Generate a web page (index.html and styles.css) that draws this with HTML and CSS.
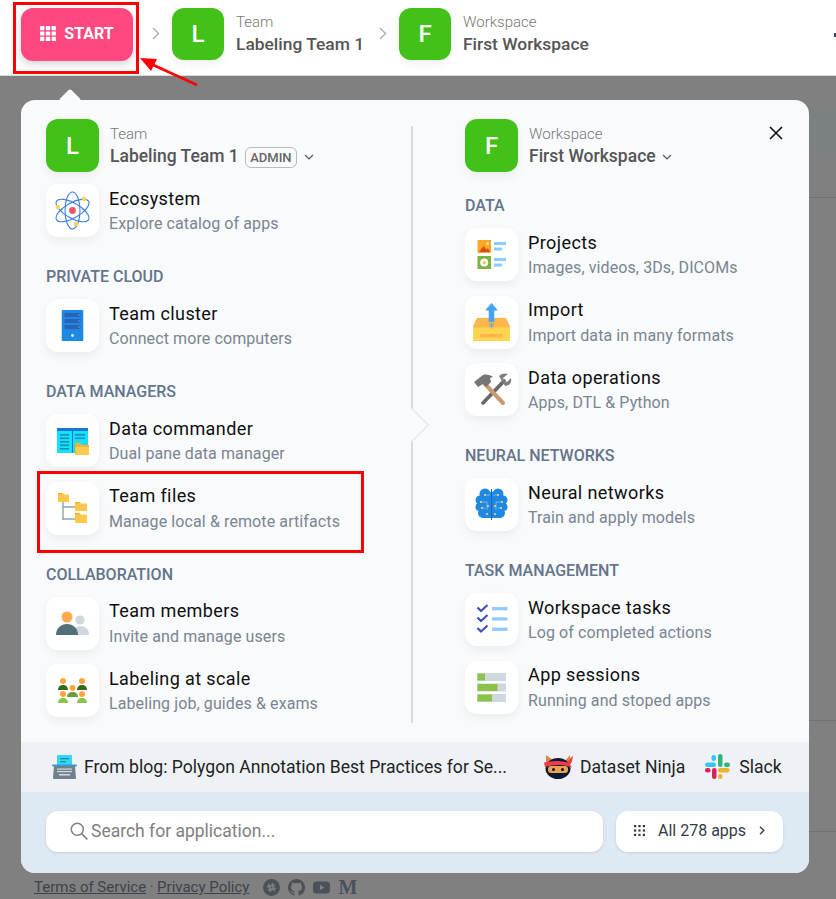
FILE: index.html
```html
<!DOCTYPE html>
<html lang="en">
<head>
  <meta charset="UTF-8">
  <meta name="viewport" content="width=device-width, initial-scale=1.0">
  <title>Start menu</title>
  <link rel="stylesheet" href="styles.css">
</head>
<body>

<header class="topbar">
  <button class="start-btn">
    <svg width="16" height="15" viewBox="0 0 16 15" fill="#fff"><rect width="4.4" height="4.2" rx=".6"/><rect x="5.8" width="4.4" height="4.2" rx=".6"/><rect x="11.6" width="4.4" height="4.2" rx=".6"/><rect y="5.4" width="4.4" height="4.2" rx=".6"/><rect x="5.8" y="5.4" width="4.4" height="4.2" rx=".6"/><rect x="11.6" y="5.4" width="4.4" height="4.2" rx=".6"/><rect y="10.8" width="4.4" height="4.2" rx=".6"/><rect x="5.8" y="10.8" width="4.4" height="4.2" rx=".6"/><rect x="11.6" y="10.8" width="4.4" height="4.2" rx=".6"/></svg>
    START
  </button>
  <svg class="crumb-sep" width="8" height="13" viewBox="0 0 8 13"><path d="M1 1l5.5 5.5L1 12" fill="none" stroke="#a8adb3" stroke-width="1.4"/></svg>
  <div class="avatar avatar-top">L</div>
  <div class="crumb-text">
    <div class="caption">Team</div>
    <div class="name">Labeling Team 1</div>
  </div>
  <svg class="crumb-sep" width="8" height="13" viewBox="0 0 8 13"><path d="M1 1l5.5 5.5L1 12" fill="none" stroke="#a8adb3" stroke-width="1.4"/></svg>
  <div class="avatar avatar-top">F</div>
  <div class="crumb-text">
    <div class="caption">Workspace</div>
    <div class="name">First Workspace</div>
  </div>
  <span class="top-dot"></span>
</header>

<main class="page-content">
  <div class="bg-band"></div>
  <div class="bg-row bg-row-a"></div>
  <div class="bg-row bg-row-b"></div>
  <div class="bg-row bg-row-c"></div>
  <footer class="site-footer">
    <a href="#">Terms of Service</a><span class="dot">·</span><a href="#">Privacy Policy</a>
    <span class="footer-icons">
      <svg width="17" height="17" viewBox="0 0 17 17"><circle cx="8.5" cy="8.5" r="8.5" fill="#4a5159"/><g transform="rotate(-15 8.5 8.5)"><path d="M6.8 5v7M10.2 5v7M5 6.8h7M5 10.2h7" stroke="#808080" stroke-width="1.6" stroke-linecap="round"/></g></svg>
      <svg width="17" height="17" viewBox="0 0 16 16" fill="#4a5159"><path d="M8 0C3.58 0 0 3.58 0 8c0 3.54 2.29 6.53 5.47 7.59.4.07.55-.17.55-.38 0-.19-.01-.82-.01-1.49-2.01.37-2.53-.49-2.69-.94-.09-.23-.48-.94-.82-1.13-.28-.15-.68-.52-.01-.53.63-.01 1.08.58 1.23.82.72 1.21 1.87.87 2.33.66.07-.52.28-.87.51-1.07-1.78-.2-3.64-.89-3.64-3.95 0-.87.31-1.59.82-2.15-.08-.2-.36-1.02.08-2.12 0 0 .67-.21 2.2.82.64-.18 1.32-.27 2-.27s1.36.09 2 .27c1.53-1.04 2.2-.82 2.2-.82.44 1.1.16 1.92.08 2.12.51.56.82 1.27.82 2.15 0 3.07-1.87 3.75-3.65 3.95.29.25.54.73.54 1.48 0 1.07-.01 1.93-.01 2.2 0 .21.15.46.55.38A8.01 8.01 0 0 0 16 8c0-4.42-3.58-8-8-8z"/></svg>
      <svg width="17" height="17" viewBox="0 0 17 17"><rect y="2.5" width="17" height="12" rx="3.5" fill="#4a5159"/><path d="M7 5.8v5.4l4.4-2.7z" fill="#808080"/></svg>
      <span class="medium-m">M</span>
    </span>
  </footer>
</main>

<section class="panel">
  <div class="panel-notch"></div>
  <button class="panel-close">
    <svg width="14" height="14" viewBox="0 0 14 14"><path d="M1 1l12 12M13 1L1 13" stroke="#111" stroke-width="1.6"/></svg>
  </button>

  <div class="panel-body">
    <div class="col col-left">
      <div class="col-head">
        <div class="avatar">L</div>
        <div class="crumb-text">
          <div class="caption">Team</div>
          <div class="name">Labeling Team 1 <span class="role">ADMIN</span>
            <svg class="caret" width="10" height="6" viewBox="0 0 10 6"><path d="M1 1l4 4 4-4" fill="none" stroke="#555" stroke-width="1.2"/></svg>
          </div>
        </div>
      </div>

      <a class="item item-first">
        <span class="icon">
          <svg viewBox="0 0 53 53" width="53" height="53"><g fill="none" stroke="#3d7fe0" stroke-width="1.1"><ellipse cx="26.5" cy="26.5" rx="18.5" ry="7.5" transform="rotate(30 26.5 26.5)"/><ellipse cx="26.5" cy="26.5" rx="18.5" ry="7.5" transform="rotate(90 26.5 26.5)"/><ellipse cx="26.5" cy="26.5" rx="18.5" ry="7.5" transform="rotate(150 26.5 26.5)"/></g><circle cx="26.5" cy="26.5" r="3.4" fill="#ef5565"/><circle cx="38" cy="15" r="2.2" fill="#ffd54f"/><circle cx="11.8" cy="23" r="2.2" fill="#ffd54f"/><circle cx="30" cy="40" r="2.2" fill="#ffd54f"/></svg>
        </span>
        <span class="item-text"><span class="item-title">Ecosystem</span><span class="item-sub">Explore catalog of apps</span></span>
      </a>

      <div class="section">
        <h4>Private cloud</h4>
        <a class="item">
          <span class="icon">
            <svg viewBox="0 0 53 53" width="53" height="53"><rect x="15.7" y="11" width="21.6" height="31" rx="1" fill="#1e88e5"/><rect x="18.5" y="14" width="16" height="4" fill="#2a62b8"/><rect x="18.5" y="20" width="16" height="4" fill="#2a62b8"/><rect x="18.5" y="26" width="16" height="4" fill="#2a62b8"/><circle cx="33" cy="16" r=".6" fill="#bbdefb"/><circle cx="33" cy="22" r=".6" fill="#bbdefb"/><circle cx="33" cy="28" r=".6" fill="#bbdefb"/><circle cx="26.5" cy="36.5" r="1.4" fill="#e3f2fd"/></svg>
          </span>
          <span class="item-text"><span class="item-title">Team cluster</span><span class="item-sub">Connect more computers</span></span>
        </a>
      </div>

      <div class="section">
        <h4>Data managers</h4>
        <a class="item">
          <span class="icon">
            <svg viewBox="0 0 53 53" width="53" height="53"><rect x="11" y="14" width="31" height="25" fill="#18e0fb"/><rect x="11" y="14" width="31" height="3" fill="#1976d2"/><rect x="26" y="17" width="1" height="22" fill="#1976d2"/><g fill="#0f8fb8"><rect x="14" y="20" width="9" height="1.6"/><rect x="14" y="23.5" width="9" height="1.6"/><rect x="14" y="27" width="9" height="1.6"/><rect x="14" y="30.5" width="9" height="1.6"/><rect x="14" y="34" width="9" height="1.6"/><rect x="29" y="20" width="10" height="1.6"/><rect x="29" y="23.5" width="10" height="1.6"/></g><path d="M29 29h5l1.5 2H43v10H29z" fill="#ffb02e"/><rect x="30" y="33" width="13" height="8" fill="#ffca4f"/></svg>
          </span>
          <span class="item-text"><span class="item-title">Data commander</span><span class="item-sub">Dual pane data manager</span></span>
        </a>
        <a class="item">
          <span class="icon">
            <svg viewBox="0 0 53 53" width="53" height="53"><path d="M17 20v18M17 25h12M17 37h12" fill="none" stroke="#90a4ae" stroke-width="1.4"/><path d="M12 11h5l1 1.5h5V20H12z" fill="#ffc84a"/><path d="M29 20h5l1 1.5h6V29H29z" fill="#ffc84a"/><path d="M29 31h5l1 1.5h6V41H29z" fill="#ffc84a"/><g fill="#ff9f2e"><rect x="12" y="11" width="4" height="1.2"/><rect x="29" y="20" width="4" height="1.2"/><rect x="29" y="31" width="4" height="1.2"/></g></svg>
          </span>
          <span class="item-text"><span class="item-title">Team files</span><span class="item-sub">Manage local &amp; remote artifacts</span></span>
        </a>
      </div>

      <div class="section">
        <h4>Collaboration</h4>
        <a class="item">
          <span class="icon">
            <svg viewBox="0 0 53 53" width="53" height="53"><circle cx="34" cy="23" r="4.6" fill="#cfd8dc"/><path d="M27 38c0-6 3-9 7.5-9s8.5 3 8.5 9z" fill="#cfd8dc"/><circle cx="21" cy="20" r="5.5" fill="#ffab4a"/><path d="M10 38c0-7 5-11 11-11s11 4 11 11z" fill="#546e7a"/></svg>
          </span>
          <span class="item-text"><span class="item-title">Team members</span><span class="item-sub">Invite and manage users</span></span>
        </a>
        <a class="item">
          <span class="icon">
            <svg viewBox="0 0 53 53" width="53" height="53"><g fill="#ffa53e"><circle cx="17" cy="17" r="3"/><circle cx="36" cy="17" r="3"/><circle cx="26.5" cy="24" r="3"/><circle cx="17" cy="30" r="3"/><circle cx="36" cy="30" r="3"/></g><g fill="#33691e"><path d="M12 26c0-3 2-5 5-5s5 2 5 5z"/><path d="M31 26c0-3 2-5 5-5s5 2 5 5z"/></g><path d="M21 33c0-3 2-5 5.5-5s5.5 2 5.5 5z" fill="#689f38"/><g fill="#8bc34a"><path d="M12 39c0-3 2-5 5-5s5 2 5 5z"/><path d="M31 39c0-3 2-5 5-5s5 2 5 5z"/></g></svg>
          </span>
          <span class="item-text"><span class="item-title">Labeling at scale</span><span class="item-sub">Labeling job, guides &amp; exams</span></span>
        </a>
      </div>
    </div>

    <div class="divider"><span class="divider-tip"></span></div>

    <div class="col col-right">
      <div class="col-head">
        <div class="avatar">F</div>
        <div class="crumb-text">
          <div class="caption">Workspace</div>
          <div class="name">First Workspace
            <svg class="caret" width="10" height="6" viewBox="0 0 10 6"><path d="M1 1l4 4 4-4" fill="none" stroke="#555" stroke-width="1.2"/></svg>
          </div>
        </div>
      </div>

      <div class="section section-first">
        <h4>Data</h4>
        <a class="item">
          <span class="icon">
            <svg viewBox="0 0 53 53" width="53" height="53"><rect x="12.5" y="12" width="13.5" height="13" fill="#ffa726"/><path d="M14 24l4.5-6 3 3.5 1.5-1.5 2 4z" fill="#d84f15"/><circle cx="22.5" cy="15.5" r="1.3" fill="#fff3c4"/><rect x="12.5" y="28" width="13.5" height="13" fill="#7cb342"/><circle cx="19.2" cy="34.5" r="4" fill="#fff"/><circle cx="19.2" cy="34.5" r="1.5" fill="#ffb74d"/><g fill="#90caf9"><rect x="29" y="14" width="12" height="3"/><rect x="29" y="19.5" width="8" height="3"/><rect x="29" y="30" width="12" height="3"/><rect x="29" y="35.5" width="8" height="3"/></g></svg>
          </span>
          <span class="item-text"><span class="item-title">Projects</span><span class="item-sub">Images, videos, 3Ds, DICOMs</span></span>
        </a>
        <a class="item">
          <span class="icon">
            <svg viewBox="0 0 53 53" width="53" height="53"><path d="M12 22h29l4 8H8z" fill="#ffb74d"/><path d="M8 30h37v15H8z" fill="#ffd54f"/><rect x="8" y="30" width="37" height="1.5" fill="#ffb74d"/><rect x="15" y="38" width="23" height="3.5" fill="#ffb74d"/><path d="M26.5 7l6.5 7.5h-3.7V26h-5.6V14.5H20z" fill="#42a5f5"/><path d="M25 27v4M26.5 27v6M28 27v4" stroke="#42a5f5" stroke-width=".7"/></svg>
          </span>
          <span class="item-text"><span class="item-title">Import</span><span class="item-sub">Import data in many formats</span></span>
        </a>
        <a class="item">
          <span class="icon">
            <svg viewBox="0 0 53 53" width="53" height="53"><path d="M18 40L39 18" stroke="#6a6a6a" stroke-width="3.8" stroke-linecap="round"/><path d="M34 13c3-3 6-3 9-2l-5 4 1 3 3 1 4-4c1 4-1 8-6 8z" fill="#808080"/><path d="M20 21l18 19" stroke="#c99a6b" stroke-width="4" stroke-linecap="round"/><path d="M9 19l9-7c3-1 8 0 10 2l-3 1 1 4-5 5-3-3-5 3z" fill="#767676"/></svg>
          </span>
          <span class="item-text"><span class="item-title">Data operations</span><span class="item-sub">Apps, DTL &amp; Python</span></span>
        </a>
      </div>

      <div class="section">
        <h4>Neural networks</h4>
        <a class="item">
          <span class="icon">
            <svg viewBox="0 0 53 53" width="53" height="53"><g fill="#1e88e5"><circle cx="20" cy="16" r="5.5"/><circle cx="33" cy="16" r="5.5"/><circle cx="15" cy="22" r="4.5"/><circle cx="38" cy="22" r="4.5"/><circle cx="14.5" cy="29" r="4"/><circle cx="38.5" cy="29" r="4"/><circle cx="18" cy="35" r="5"/><circle cx="35" cy="35" r="5"/><rect x="17" y="14" width="19" height="26"/></g><rect x="26" y="11" width="1" height="31" fill="#1565c0"/><g fill="none" stroke="#90caf9" stroke-width=".7"><path d="M20 17h5M33 17h-5M16 24h6v8M37 24h-6v8M20 30h-3M33 30h3"/></g><g fill="#ffd54f"><circle cx="20" cy="17" r="1.1"/><circle cx="33" cy="17" r="1.1"/><circle cx="16" cy="24" r="1.1"/><circle cx="37" cy="24" r="1.1"/><circle cx="23" cy="28" r="1.1"/><circle cx="30" cy="28" r="1.1"/><circle cx="17" cy="30" r="1.1"/><circle cx="36" cy="30" r="1.1"/><circle cx="22" cy="36" r="1.1"/><circle cx="30" cy="36" r="1.1"/></g></svg>
          </span>
          <span class="item-text"><span class="item-title">Neural networks</span><span class="item-sub">Train and apply models</span></span>
        </a>
      </div>

      <div class="section">
        <h4>Task management</h4>
        <a class="item">
          <span class="icon">
            <svg viewBox="0 0 53 53" width="53" height="53"><path d="M12.5 14.5l3.5 3.5 6.5-6M12.5 24.5l3.5 3.5 6.5-6M12.5 35l3.5 3.5 6.5-6" fill="none" stroke="#3f51b5" stroke-width="2.2"/><g fill="#90caf9"><rect x="27" y="14" width="15.5" height="3.3"/><rect x="27" y="24.3" width="15.5" height="3.3"/><rect x="27" y="34.6" width="15.5" height="3.3"/></g></svg>
          </span>
          <span class="item-text"><span class="item-title">Workspace tasks</span><span class="item-sub">Log of completed actions</span></span>
        </a>
        <a class="item">
          <span class="icon">
            <svg viewBox="0 0 53 53" width="53" height="53"><g fill="#cfd8dc"><rect x="12" y="12" width="29" height="8"/><rect x="12" y="22.5" width="29" height="8"/><rect x="12" y="33" width="29" height="8"/></g><g fill="#8bc34a"><rect x="12.5" y="12.5" width="7.5" height="7"/><rect x="12.5" y="23" width="20" height="7"/><rect x="12.5" y="33.5" width="14.5" height="7"/></g></svg>
          </span>
          <span class="item-text"><span class="item-title">App sessions</span><span class="item-sub">Running and stoped apps</span></span>
        </a>
      </div>
    </div>
  </div>

  <div class="news-strip">
    <a class="news-link news-blog">
      <svg width="25" height="24" viewBox="0 0 25 24"><rect x="5" y="0" width="15" height="11" rx="1" fill="#35d7f2"/><rect x="8" y="3" width="9" height="1.3" fill="#1d8fb0"/><rect x="8" y="6" width="6" height="1.3" fill="#1d8fb0"/><rect y="9.5" width="25" height="2" rx="1" fill="#2f9be0"/><path d="M2 11h21l1 12a1 1 0 0 1-1 1H2a1 1 0 0 1-1-1z" fill="#71808c"/><g fill="#d5dce1"><rect x="5" y="13.5" width="15" height="1.2"/><rect x="5" y="16" width="15" height="1.2"/><rect x="7" y="19" width="11" height="1.5"/></g></svg>
      <span>From blog: Polygon Annotation Best Practices for Se...</span>
    </a>
    <a class="news-link news-ninja">
      <svg width="30" height="25" viewBox="0 0 30 25"><path d="M3 10L3 1l7 5zM22 7l5-6 1 9z" fill="#d98a3c"/><ellipse cx="15" cy="14.5" rx="12.5" ry="10.5" fill="#0e1a33"/><rect x="5" y="12" width="20" height="7" rx="3" fill="#e8a352"/><circle cx="10.5" cy="15.5" r="1.5" fill="#111"/><circle cx="19.5" cy="15.5" r="1.5" fill="#111"/><path d="M1 8.5c8-2 16-2 23 0l6-7-1 6-2 3 2 3-5-1.5c-7-2-15-1-22 1z" fill="#ef3b4e"/></svg>
      Dataset Ninja
    </a>
    <a class="news-link news-slack">
      <svg width="25" height="25" viewBox="0 0 25 25"><rect x="0" y="8.5" width="11" height="4.5" rx="2.25" fill="#36c5f0"/><rect x="6.5" y="1" width="4.5" height="6" rx="2.25" fill="#36c5f0"/><rect x="13" y="0" width="4.5" height="13" rx="2.25" fill="#2eb67d"/><rect x="19" y="8.5" width="6" height="4.5" rx="2.25" fill="#2eb67d"/><rect x="13" y="14" width="11.5" height="4.5" rx="2.25" fill="#ecb22e"/><rect x="13" y="20" width="4.5" height="5" rx="2.25" fill="#ecb22e"/><rect x="7" y="14" width="4.5" height="11" rx="2.25" fill="#e01e5a"/><rect x="0" y="14" width="5.5" height="4.5" rx="2.25" fill="#e01e5a"/></svg>
      Slack
    </a>
  </div>

  <div class="search-bar">
    <label class="search-box">
      <svg width="18" height="18" viewBox="0 0 18 18"><circle cx="7.3" cy="7.3" r="6" fill="none" stroke="#808080" stroke-width="1.5"/><path d="M11.8 11.8L17.3 17.3" stroke="#808080" stroke-width="1.7"/></svg>
      <input type="text" placeholder="Search for application...">
    </label>
    <button class="all-apps">
      <svg width="11" height="11" viewBox="0 0 11 11" fill="#333a47"><rect width="2.2" height="2.2"/><rect x="4.4" width="2.2" height="2.2"/><rect x="8.8" width="2.2" height="2.2"/><rect y="4.4" width="2.2" height="2.2"/><rect x="4.4" y="4.4" width="2.2" height="2.2"/><rect x="8.8" y="4.4" width="2.2" height="2.2"/><rect y="8.8" width="2.2" height="2.2"/><rect x="4.4" y="8.8" width="2.2" height="2.2"/><rect x="8.8" y="8.8" width="2.2" height="2.2"/></svg>
      <span>All 278 apps</span>
      <svg width="6" height="9" viewBox="0 0 6 9"><path d="M1 .8l3.8 3.7L1 8.2" fill="none" stroke="#333a47" stroke-width="1.3"/></svg>
    </button>
  </div>
</section>

<!-- red marks drawn over the screenshot -->
<div class="mark mark-start"></div>
<div class="mark mark-files"></div>
<svg class="mark-arrow" width="70" height="40" viewBox="0 0 70 40"><path d="M60 30L12 8" stroke="#f00" stroke-width="2.5"/><path d="M3 3l17 1-6 12z" fill="#f00"/></svg>

</body>
</html>
```

FILE: styles.css
```css
* {
  box-sizing: border-box;
}
html, body {
  height: 899px;
}
body {
  margin: 0;
  position: relative;
  overflow: hidden;
  font-family: Roboto, "Liberation Sans", sans-serif;
  background: #808080;
}
a {
  color: inherit;
  text-decoration: none;
}

/* top bar */
.topbar {
  height: 76px;
  display: flex;
  align-items: flex-start;
  padding: 8px 0 0 21px;
  background: #fff;
  border-bottom: 1px solid #d8d8d8;
  position: relative;
}
.start-btn {
  width: 112px;
  height: 53px;
  display: flex;
  align-items: center;
  justify-content: center;
  gap: 8px;
  padding: 0 0 3px;
  margin-right: 4px;
  border: none;
  border-radius: 12px;
  background: #ff4880;
  color: #fff;
  font-family: inherit;
  font-size: 16px;
  font-weight: 700;
  box-shadow: 0 3px 8px rgba(0,0,0,0.18);
}
.crumb-sep {
  margin: 19px 12px 0 15px;
  flex: none;
}
.avatar {
  width: 53px;
  height: 53px;
  flex: none;
  display: flex;
  align-items: center;
  justify-content: center;
  border-radius: 12px;
  background: #42c118;
  color: #fff;
  font-size: 24px;
  font-weight: 500;
  box-shadow: 0 4px 10px rgba(0,0,0,0.06);
}
.avatar-top {
  width: 52px;
  height: 52px;
}
.crumb-text {
  margin-left: 11px;
  padding-top: 5px;
}
.caption {
  height: 20px;
  line-height: 20px;
  font-size: 15px;
  font-weight: 300;
  color: #777;
}
.name {
  height: 24px;
  line-height: 24px;
  font-size: 17.5px;
  font-weight: 500;
  color: #555;
  white-space: nowrap;
}
.topbar .crumb-text {
  margin-left: 12px;
  padding-top: 4px;
}
.topbar .name {
  font-size: 17.4px;
}
.top-dot {
  position: absolute;
  right: 0;
  top: 33px;
  width: 2px;
  height: 4px;
  background: #3d4a66;
}

/* what can be seen of the page behind the overlay */
.page-content {
  padding-left: 40px;
}
.bg-band {
  margin-top: 32px;
  height: 45px;
  background: #7b8080;
}
.bg-row {
  border-bottom: 1px solid #717171;
}
.bg-row-a {
  height: 45px;
}
.bg-row-b {
  height: 523px;
}
.bg-row-c {
  height: 111px;
}
.site-footer {
  display: flex;
  align-items: center;
  height: 20px;
  margin: 45px 0 0 -6px;
  font-size: 15px;
  color: #3c434c;
}
.site-footer a {
  text-decoration: underline;
}
.site-footer .dot {
  margin: 0 3.5px;
}
.footer-icons {
  display: flex;
  align-items: center;
  gap: 8px;
  margin-left: 14px;
}
.medium-m {
  width: 17px;
  font-family: "Liberation Serif", serif;
  font-size: 20px;
  font-weight: 700;
  line-height: 17px;
  color: #4a5159;
}

/* popup */
.panel {
  position: absolute;
  left: 21px;
  top: 100px;
  width: 788px;
  height: 773px;
  display: flex;
  flex-direction: column;
  border-radius: 14px;
  background: #f8fafc;
}
.panel-notch {
  position: absolute;
  left: 41px;
  top: -8px;
  width: 16px;
  height: 16px;
  background: #f8fafc;
  transform: rotate(45deg);
  border-radius: 2px;
}
.panel-close {
  position: absolute;
  right: 26px;
  top: 26px;
  padding: 0;
  width: 14px;
  height: 14px;
  border: none;
  background: none;
  display: flex;
}
.panel-body {
  height: 642px;
  flex: none;
  display: flex;
  padding: 19px 0 0 25px;
}
.col-left {
  width: 365px;
}
.col-right {
  padding-left: 52px;
}
.col-head {
  display: flex;
  position: relative;
}
.role {
  display: inline-block;
  height: 21px;
  line-height: 19px;
  margin: 0 1px 0 2px;
  padding: 0 4px;
  border: 1px solid #b4bcc6;
  border-radius: 6px;
  font-size: 13px;
  font-weight: 500;
  color: #666;
}
.caret {
  margin-left: 2px;
  vertical-align: 2px;
}
.divider {
  width: 2px;
  height: 597px;
  margin-top: 7px;
  background: #d5dde4;
  position: relative;
}
.divider-tip {
  position: absolute;
  left: -11px;
  top: 287px;
  width: 24px;
  height: 24px;
  background: #f8fafc;
  border-top: 1px solid #dfe6ec;
  border-right: 1px solid #dfe6ec;
  transform: rotate(45deg);
}
.section {
  margin-top: 29px;
  display: flex;
  flex-direction: column;
}
.section-first {
  margin-top: 23px;
}
.section h4 {
  margin: 0 0 11px;
  height: 22px;
  line-height: 22px;
  font-size: 16px;
  font-weight: 500;
  text-transform: uppercase;
  color: #64748b;
}
.item {
  display: flex;
  gap: 10px;
  height: 53px;
  flex: none;
}
.item + .item {
  margin-top: 14.5px;
}
.item-first {
  margin-top: 12px;
}
.icon {
  width: 53px;
  height: 53px;
  flex: none;
  display: block;
  border-radius: 12px;
  background: #fff;
  box-shadow: 0 4px 10px rgba(0,0,0,0.06);
}
.icon svg {
  display: block;
}
.item-text {
  display: flex;
  flex-direction: column;
  padding-top: 2.9px;
}
.item-title {
  line-height: 24.4px;
  font-size: 18px;
  color: #0e0e0e;
  letter-spacing: 0.4px;
}
.item-sub {
  line-height: 25px;
  font-size: 16px;
  letter-spacing: 0.1px;
  color: #7a8591;
}

/* blog and links strip */
.news-strip {
  height: 50px;
  flex: none;
  display: flex;
  align-items: center;
  padding: 0 0 1px 31px;
  background: #eef2f6;
  font-size: 17.6px;
  color: #222;
}
.news-link {
  display: flex;
  align-items: center;
  white-space: nowrap;
}
.news-blog {
  width: 491px;
  gap: 7px;
}
.news-ninja {
  gap: 7px;
}
.news-slack {
  gap: 9px;
  margin-left: 20px;
}

/* search */
.search-bar {
  flex: 1;
  display: flex;
  gap: 13px;
  padding: 19px 25px 0;
  background: #deeaf3;
  border-radius: 0 0 14px 14px;
}
.search-box {
  width: 557px;
  height: 41px;
  display: flex;
  align-items: center;
  gap: 3px;
  padding: 0 0 1px 24px;
  border-radius: 12px;
  background: #fff;
  box-shadow: 0 1px 3px rgba(0,0,0,0.12);
}
.search-box input {
  flex: 1;
  border: none;
  outline: none;
  background: none;
  padding: 0;
  font-family: inherit;
  font-size: 17.5px;
}
.search-box input::placeholder {
  color: #808080;
  opacity: 1;
}
.all-apps {
  width: 167px;
  height: 41px;
  display: flex;
  align-items: center;
  padding: 0 17px 2px 18px;
  gap: 13px;
  border: none;
  border-radius: 12px;
  background: #fff;
  font-family: inherit;
  font-size: 16px;
  color: #333a47;
  box-shadow: 0 1px 3px rgba(0,0,0,0.12);
}

/* red marks */
.mark {
  position: absolute;
  border: 3px solid #f00;
}
.mark-start {
  left: 13px;
  top: 2px;
  width: 126px;
  height: 72px;
}
.mark-files {
  left: 37px;
  top: 471px;
  width: 327px;
  height: 82px;
}
.mark-arrow {
  position: absolute;
  left: 137px;
  top: 55px;
}
```
